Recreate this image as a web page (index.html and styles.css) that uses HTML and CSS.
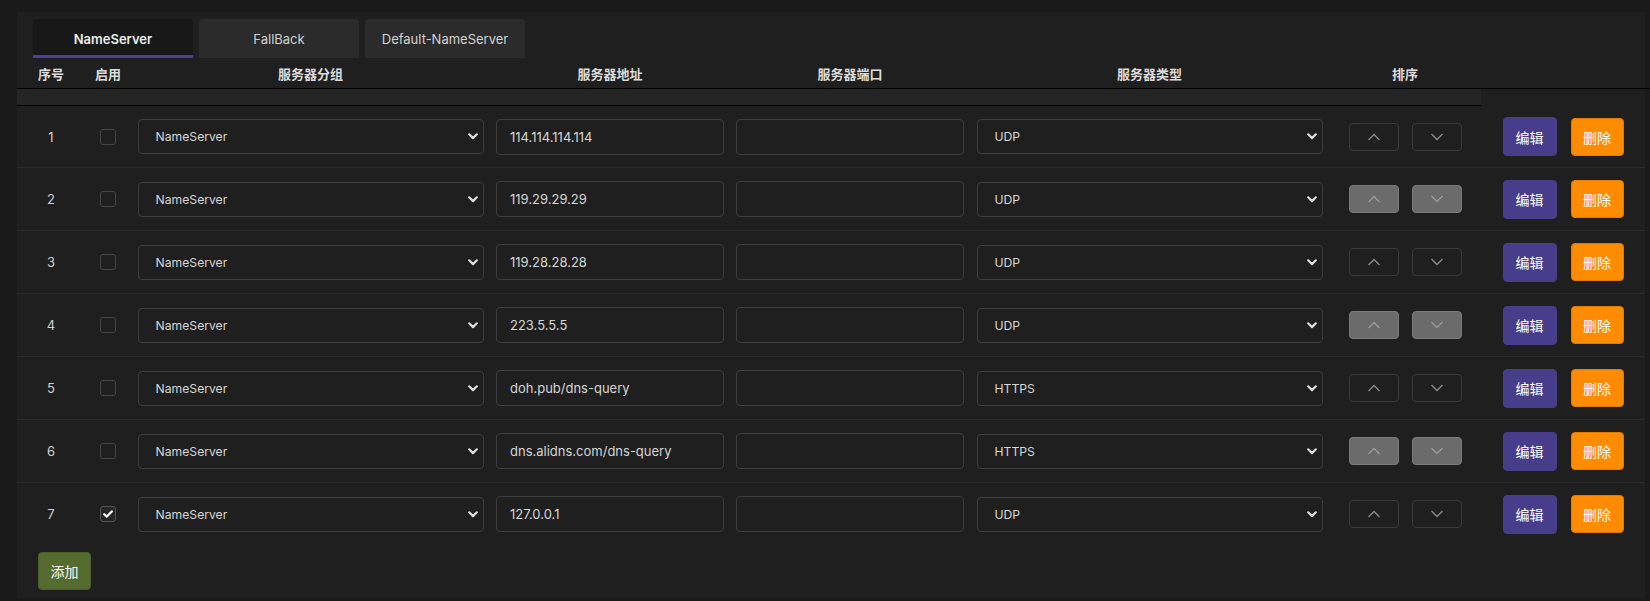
FILE: index.html
```html
<!DOCTYPE html>
<html lang="zh">
<head>
<meta charset="utf-8">
<title>NameServer</title>
<link rel="stylesheet" href="styles.css">
</head>
<body>
<div class="panel">
  <div class="tabs">
    <div class="tab active">NameServer</div>
    <div class="tab">FallBack</div>
    <div class="tab">Default-NameServer</div>
  </div>
  <div class="thead grid">
    <div class="hc">序号</div>
    <div class="hc">启用</div>
    <div class="hc">服务器分组</div>
    <div class="hc">服务器地址</div>
    <div class="hc">服务器端口</div>
    <div class="hc">服务器类型</div>
    <div class="hc">排序</div>
    <div class="hc"></div>
  </div>
  <div class="band"></div>

  <div class="rows">
    <div class="row grid first">
      <div class="c num">1</div>
      <div class="c"><span class="cb"></span></div>
      <div class="c"><div class="select"><span>NameServer</span><svg class="arr" width="10" height="7" viewBox="0 0 10 7"><path d="M1.2 1.3 L5 5.1 L8.8 1.3" /></svg></div></div>
      <div class="c"><input class="input" value="114.114.114.114"></div>
      <div class="c"><input class="input" value=""></div>
      <div class="c"><div class="select"><span>UDP</span><svg class="arr" width="10" height="7" viewBox="0 0 10 7"><path d="M1.2 1.3 L5 5.1 L8.8 1.3" /></svg></div></div>
      <div class="c sort"><span class="sbtn"><svg width="14" height="8" viewBox="0 0 14 8"><path d="M1.5 7 L7 1.5 L12.5 7"/></svg></span><span class="sbtn"><svg width="14" height="8" viewBox="0 0 14 8"><path d="M1.5 1 L7 6.5 L12.5 1"/></svg></span></div>
      <div class="c act"><button class="btn edit">编辑</button><button class="btn del">删除</button></div>
    </div>

    <div class="row grid">
      <div class="c num">2</div>
      <div class="c"><span class="cb"></span></div>
      <div class="c"><div class="select"><span>NameServer</span><svg class="arr" width="10" height="7" viewBox="0 0 10 7"><path d="M1.2 1.3 L5 5.1 L8.8 1.3" /></svg></div></div>
      <div class="c"><input class="input" value="119.29.29.29"></div>
      <div class="c"><input class="input" value=""></div>
      <div class="c"><div class="select"><span>UDP</span><svg class="arr" width="10" height="7" viewBox="0 0 10 7"><path d="M1.2 1.3 L5 5.1 L8.8 1.3" /></svg></div></div>
      <div class="c sort"><span class="sbtn fill"><svg width="14" height="8" viewBox="0 0 14 8"><path d="M1.5 7 L7 1.5 L12.5 7"/></svg></span><span class="sbtn fill"><svg width="14" height="8" viewBox="0 0 14 8"><path d="M1.5 1 L7 6.5 L12.5 1"/></svg></span></div>
      <div class="c act"><button class="btn edit">编辑</button><button class="btn del">删除</button></div>
    </div>

    <div class="row grid">
      <div class="c num">3</div>
      <div class="c"><span class="cb"></span></div>
      <div class="c"><div class="select"><span>NameServer</span><svg class="arr" width="10" height="7" viewBox="0 0 10 7"><path d="M1.2 1.3 L5 5.1 L8.8 1.3" /></svg></div></div>
      <div class="c"><input class="input" value="119.28.28.28"></div>
      <div class="c"><input class="input" value=""></div>
      <div class="c"><div class="select"><span>UDP</span><svg class="arr" width="10" height="7" viewBox="0 0 10 7"><path d="M1.2 1.3 L5 5.1 L8.8 1.3" /></svg></div></div>
      <div class="c sort"><span class="sbtn"><svg width="14" height="8" viewBox="0 0 14 8"><path d="M1.5 7 L7 1.5 L12.5 7"/></svg></span><span class="sbtn"><svg width="14" height="8" viewBox="0 0 14 8"><path d="M1.5 1 L7 6.5 L12.5 1"/></svg></span></div>
      <div class="c act"><button class="btn edit">编辑</button><button class="btn del">删除</button></div>
    </div>

    <div class="row grid">
      <div class="c num">4</div>
      <div class="c"><span class="cb"></span></div>
      <div class="c"><div class="select"><span>NameServer</span><svg class="arr" width="10" height="7" viewBox="0 0 10 7"><path d="M1.2 1.3 L5 5.1 L8.8 1.3" /></svg></div></div>
      <div class="c"><input class="input" value="223.5.5.5"></div>
      <div class="c"><input class="input" value=""></div>
      <div class="c"><div class="select"><span>UDP</span><svg class="arr" width="10" height="7" viewBox="0 0 10 7"><path d="M1.2 1.3 L5 5.1 L8.8 1.3" /></svg></div></div>
      <div class="c sort"><span class="sbtn fill"><svg width="14" height="8" viewBox="0 0 14 8"><path d="M1.5 7 L7 1.5 L12.5 7"/></svg></span><span class="sbtn fill"><svg width="14" height="8" viewBox="0 0 14 8"><path d="M1.5 1 L7 6.5 L12.5 1"/></svg></span></div>
      <div class="c act"><button class="btn edit">编辑</button><button class="btn del">删除</button></div>
    </div>

    <div class="row grid">
      <div class="c num">5</div>
      <div class="c"><span class="cb"></span></div>
      <div class="c"><div class="select"><span>NameServer</span><svg class="arr" width="10" height="7" viewBox="0 0 10 7"><path d="M1.2 1.3 L5 5.1 L8.8 1.3" /></svg></div></div>
      <div class="c"><input class="input" value="doh.pub/dns-query"></div>
      <div class="c"><input class="input" value=""></div>
      <div class="c"><div class="select"><span>HTTPS</span><svg class="arr" width="10" height="7" viewBox="0 0 10 7"><path d="M1.2 1.3 L5 5.1 L8.8 1.3" /></svg></div></div>
      <div class="c sort"><span class="sbtn"><svg width="14" height="8" viewBox="0 0 14 8"><path d="M1.5 7 L7 1.5 L12.5 7"/></svg></span><span class="sbtn"><svg width="14" height="8" viewBox="0 0 14 8"><path d="M1.5 1 L7 6.5 L12.5 1"/></svg></span></div>
      <div class="c act"><button class="btn edit">编辑</button><button class="btn del">删除</button></div>
    </div>

    <div class="row grid">
      <div class="c num">6</div>
      <div class="c"><span class="cb"></span></div>
      <div class="c"><div class="select"><span>NameServer</span><svg class="arr" width="10" height="7" viewBox="0 0 10 7"><path d="M1.2 1.3 L5 5.1 L8.8 1.3" /></svg></div></div>
      <div class="c"><input class="input" value="dns.alidns.com/dns-query"></div>
      <div class="c"><input class="input" value=""></div>
      <div class="c"><div class="select"><span>HTTPS</span><svg class="arr" width="10" height="7" viewBox="0 0 10 7"><path d="M1.2 1.3 L5 5.1 L8.8 1.3" /></svg></div></div>
      <div class="c sort"><span class="sbtn fill"><svg width="14" height="8" viewBox="0 0 14 8"><path d="M1.5 7 L7 1.5 L12.5 7"/></svg></span><span class="sbtn fill"><svg width="14" height="8" viewBox="0 0 14 8"><path d="M1.5 1 L7 6.5 L12.5 1"/></svg></span></div>
      <div class="c act"><button class="btn edit">编辑</button><button class="btn del">删除</button></div>
    </div>

    <div class="row grid">
      <div class="c num">7</div>
      <div class="c"><span class="cb checked"><svg width="10" height="8" viewBox="0 0 10 8"><path d="M1.2 4.2 L3.8 6.6 L8.8 1.4"/></svg></span></div>
      <div class="c"><div class="select"><span>NameServer</span><svg class="arr" width="10" height="7" viewBox="0 0 10 7"><path d="M1.2 1.3 L5 5.1 L8.8 1.3" /></svg></div></div>
      <div class="c"><input class="input" value="127.0.0.1"></div>
      <div class="c"><input class="input" value=""></div>
      <div class="c"><div class="select"><span>UDP</span><svg class="arr" width="10" height="7" viewBox="0 0 10 7"><path d="M1.2 1.3 L5 5.1 L8.8 1.3" /></svg></div></div>
      <div class="c sort"><span class="sbtn"><svg width="14" height="8" viewBox="0 0 14 8"><path d="M1.5 7 L7 1.5 L12.5 7"/></svg></span><span class="sbtn"><svg width="14" height="8" viewBox="0 0 14 8"><path d="M1.5 1 L7 6.5 L12.5 1"/></svg></span></div>
      <div class="c act"><button class="btn edit">编辑</button><button class="btn del">删除</button></div>
    </div>
  </div>

  <div class="foot"><button class="btn add">添加</button></div>
</div>
</body>
</html>
```
FILE: styles.css
```css
* { box-sizing: border-box; }

html, body { height: 601px; }

body {
  margin: 0;
  background: #1a1a1a;
  font-family: Inter, "Noto Sans CJK SC", sans-serif;
  color: #d4d4d4;
  overflow: hidden;
}

.panel {
  margin: 12px 5px 0 17px;
  background: #1f1f1f;
  padding: 7px 0 8px 0;
}

.tabs {
  display: flex;
  gap: 6px;
  padding-left: 16px;
}

.tab {
  width: 160px;
  height: 39px;
  display: flex;
  align-items: center;
  justify-content: center;
  background: #2b2b2b;
  border-radius: 4px 4px 0 0;
  font-size: 13px;
  color: #d2d2d2;
}

.tab.active {
  background: #181818;
  border-bottom: 3px solid #4d3f8f;
  padding-top: 3px;
  font-weight: 600;
  color: #ececec;
}

.grid {
  display: grid;
  grid-template-columns: 68px 46px 359px 240px 240px 359px 152px 164px;
}

.thead {
  height: 31px;
  border-bottom: 1px solid #000;
  margin-right: -5px;
  align-items: center;
  font-family: "Noto Sans CJK SC", sans-serif;
  font-weight: 700;
  font-size: 13px;
  color: #dcdcdc;
}

.hc { text-align: center; }

.band {
  width: 1464px;
  height: 17px;
  background: #252525;
  border-bottom: 1px solid #000;
}

.row {
  height: 63px;
  border-top: 1px solid #2a2a2a;
  align-items: center;
}

.row.first {
  height: 61px;
  border-top: 0;
}

.c {
  display: flex;
  align-items: center;
  justify-content: center;
}

.num {
  font-size: 13px;
  color: #cfcfcf;
}

.cb {
  width: 16px;
  height: 16px;
  border: 1px solid #464646;
  border-radius: 3px;
  display: flex;
  align-items: center;
  justify-content: center;
}

.cb.checked {
  border-color: #555;
  background: #262626;
}

.cb svg path {
  fill: none;
  stroke: #fff;
  stroke-width: 2.2;
  stroke-linecap: round;
  stroke-linejoin: round;
}

.select {
  width: 346px;
  height: 35px;
  border: 1px solid #3e3e3e;
  border-radius: 4px;
  display: flex;
  align-items: center;
  justify-content: space-between;
  padding: 0 5px 0 17px;
  font-size: 12.2px;
  color: #d6d6d6;
}

.arr path {
  fill: none;
  stroke: #dcdcdc;
  stroke-width: 2.2;
  stroke-linecap: round;
  stroke-linejoin: round;
}

.input {
  width: 228px;
  height: 36px;
  border: 1px solid #3e3e3e;
  border-radius: 4px;
  background: transparent;
  padding: 0 13px;
  font-family: Inter, sans-serif;
  font-size: 13px;
  color: #d6d6d6;
  outline: none;
}

.sort { gap: 13px; }

.sbtn {
  width: 50px;
  height: 28px;
  border: 1px solid #3b3b3b;
  border-radius: 4px;
  display: flex;
  align-items: center;
  justify-content: center;
}

.sbtn.fill {
  background: #6b6b6b;
  border-color: #7a7a7a;
}

.sbtn path {
  fill: none;
  stroke: #8c8c8c;
  stroke-width: 1.3;
}

.sbtn.fill path { stroke: #9c9c9c; }

.act { gap: 14px; }

.btn {
  width: 54px;
  height: 39px;
  border: 1px solid transparent;
  border-radius: 4px;
  font-family: "Noto Sans CJK SC", sans-serif;
  font-size: 14px;
  color: #fff;
  padding: 0;
}

.btn.edit {
  background: #483d8b;
  border-color: #483d8b;
}

.btn.del {
  width: 53px;
  height: 38px;
  background: #ff8c00;
  border-color: #e07c00;
}

.foot { padding: 7px 0 0 21px; }

.btn.add {
  width: 53px;
  height: 38px;
  background: #556b2f;
  border-color: #4a5e28;
}
```
